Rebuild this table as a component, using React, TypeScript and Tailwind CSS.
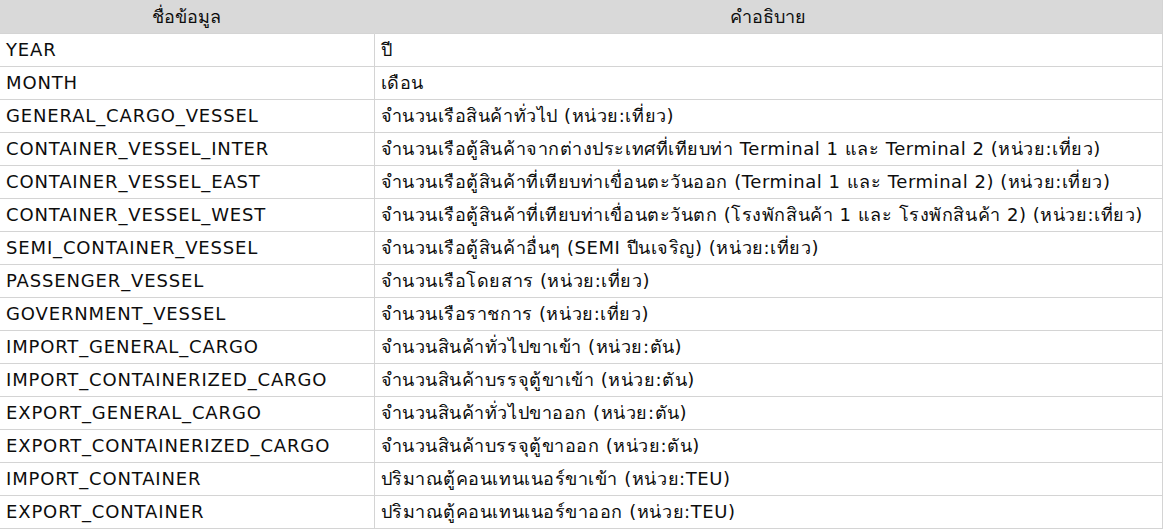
import React from 'react';

const rows: [string, string][] = [
  ['YEAR', 'ปี'],
  ['MONTH', 'เดือน'],
  ['GENERAL_CARGO_VESSEL', 'จำนวนเรือสินค้าทั่วไป (หน่วย:เที่ยว)'],
  ['CONTAINER_VESSEL_INTER', 'จำนวนเรือตู้สินค้าจากต่างประเทศที่เทียบท่า Terminal 1 และ Terminal 2 (หน่วย:เที่ยว)'],
  ['CONTAINER_VESSEL_EAST', 'จำนวนเรือตู้สินค้าที่เทียบท่าเขื่อนตะวันออก (Terminal 1 และ Terminal 2) (หน่วย:เที่ยว)'],
  ['CONTAINER_VESSEL_WEST', 'จำนวนเรือตู้สินค้าที่เทียบท่าเขื่อนตะวันตก (โรงพักสินค้า 1 และ โรงพักสินค้า 2) (หน่วย:เที่ยว)'],
  ['SEMI_CONTAINER_VESSEL', 'จำนวนเรือตู้สินค้าอื่นๆ (SEMI ปีนเจริญ) (หน่วย:เที่ยว)'],
  ['PASSENGER_VESSEL', 'จำนวนเรือโดยสาร (หน่วย:เที่ยว)'],
  ['GOVERNMENT_VESSEL', 'จำนวนเรือราชการ (หน่วย:เที่ยว)'],
  ['IMPORT_GENERAL_CARGO', 'จำนวนสินค้าทั่วไปขาเข้า (หน่วย:ตัน)'],
  ['IMPORT_CONTAINERIZED_CARGO', 'จำนวนสินค้าบรรจุตู้ขาเข้า (หน่วย:ตัน)'],
  ['EXPORT_GENERAL_CARGO', 'จำนวนสินค้าทั่วไปขาออก (หน่วย:ตัน)'],
  ['EXPORT_CONTAINERIZED_CARGO', 'จำนวนสินค้าบรรจุตู้ขาออก (หน่วย:ตัน)'],
  ['IMPORT_CONTAINER', 'ปริมาณตู้คอนเทนเนอร์ขาเข้า (หน่วย:TEU)'],
  ['EXPORT_CONTAINER', 'ปริมาณตู้คอนเทนเนอร์ขาออก (หน่วย:TEU)'],
];

export default function App() {
  return (
    <div className="w-[1164px] h-[529px] bg-white font-['DejaVu_Sans',sans-serif] text-[#0d0d0d] text-[18px]">
      <table className="w-[1163px] border-collapse table-fixed">
        <colgroup>
          <col className="w-[374px]" />
          <col />
        </colgroup>
        <thead>
          <tr className="h-[33px] bg-[#d9d9d9]">
            <th className="font-normal text-center border-r border-[#d9d9d9] p-0">ชื่อข้อมูล</th>
            <th className="font-normal text-center border-r border-[#d4d4d4] p-0">คำอธิบาย</th>
          </tr>
        </thead>
        <tbody>
          {rows.map(([name, desc]) => (
            <tr key={name} className="h-[33px]">
              <td className="border border-[#d4d4d4] border-l-0 pl-[6px] p-0 whitespace-nowrap tracking-[0.85px]">{name}</td>
              <td className="border border-[#d4d4d4] pl-[6px] p-0 whitespace-nowrap tracking-[0.55px]">{desc}</td>
            </tr>
          ))}
        </tbody>
      </table>
    </div>
  );
}
